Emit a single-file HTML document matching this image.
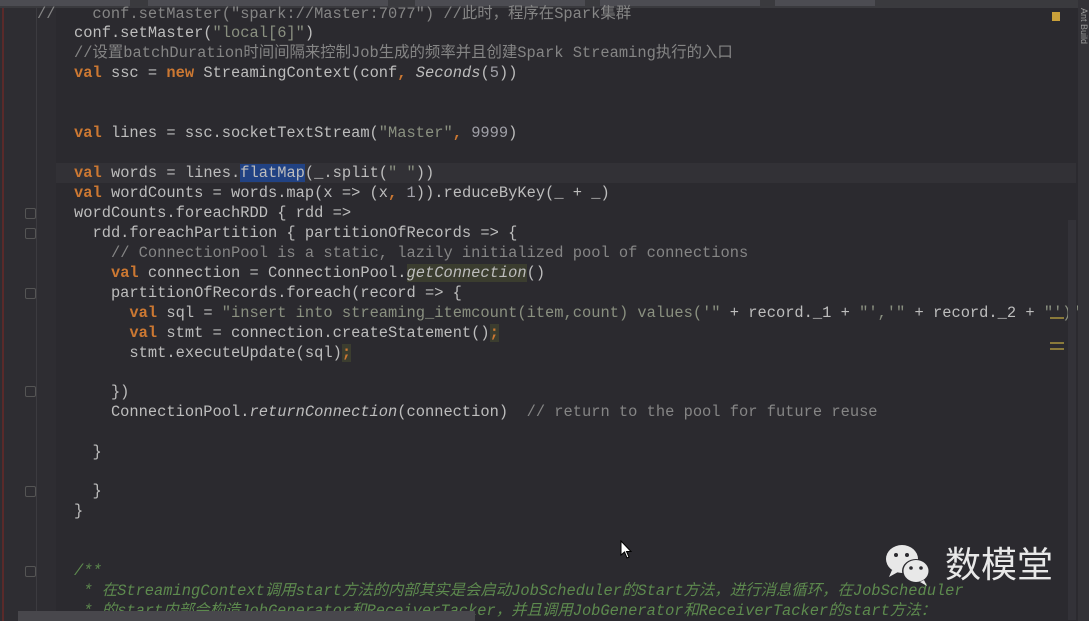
<!DOCTYPE html>
<html><head><meta charset="utf-8"><style>
body{margin:0;width:1089px;height:621px;overflow:hidden;background:#2b2a2f;position:relative;font-family:"Liberation Mono","Noto Sans CJK SC",monospace;}
.tabs{position:absolute;left:0;top:0;width:1089px;height:8px;background:#3a3a3e;}
.tabs i{position:absolute;top:0;height:6px;background:#4c4c52;}
.gut{position:absolute;left:0;top:8px;width:56px;height:613px;background:#2e2d32;}
.red{position:absolute;left:2px;top:8px;width:2px;height:613px;background:#5a2a2a;}
.vl{position:absolute;left:36px;top:8px;width:1px;height:613px;background:#3c3b40;}
.cur{position:absolute;left:56px;top:163px;width:1020px;height:20px;background:#323136;}
.ln{position:absolute;left:0;white-space:pre;font-size:15.4px;line-height:20px;color:#bdbdbd;}
.k{color:#cc7832;font-weight:bold}
.s{color:#8a9080}
.n{color:#a0a0a8}
.c{color:#858585}
.d{color:#5d8a4e;font-style:italic}
.it{font-style:italic}
.sel{background:#214283}
.hl{background:#3b3d2f}
.rp{position:absolute;left:1078px;top:0;width:11px;height:621px;background:#333237;}
.sb{position:absolute;left:1068px;top:220px;width:8px;height:400px;background:#333238;}
.hs{position:absolute;left:18px;top:611px;width:457px;height:10px;background:#48474c;}
.fold{position:absolute;left:25px;width:9px;height:9px;border:1px solid #555;border-radius:2px;}
.wm{position:absolute;left:945px;top:540px;font-family:"Noto Sans CJK SC",sans-serif;font-size:36px;color:#e8e8e8;line-height:44px;}
</style></head><body>
<div class="tabs"><i style="left:0;width:130px"></i><i style="left:148px;width:240px"></i><i style="left:415px;width:170px"></i><i style="left:600px;width:160px"></i><i style="left:775px;width:100px"></i></div>
<div class="gut"></div><div class="red"></div><div class="vl"></div>
<div class="cur"></div>
<div class="fold" style="top:208px"></div><div class="fold" style="top:228px"></div><div class="fold" style="top:288px"></div><div class="fold" style="top:386px"></div><div class="fold" style="top:486px"></div><div class="fold" style="top:566px"></div>
<div class="ln" style="left:37px;top:4px"><span class="c">//    conf.setMaster("spark://Master:7077") //此时，程序在Spark集群</span></div>
<div class="ln" style="left:74px;top:23px">conf.setMaster(<span class="s">"local[6]"</span>)</div>
<div class="ln" style="left:74px;top:43px"><span class="c">//设置batchDuration时间间隔来控制Job生成的频率并且创建Spark Streaming执行的入口</span></div>
<div class="ln" style="left:74px;top:63px"><span class="k">val</span> ssc = <span class="k">new</span> StreamingContext(conf<span class="k">,</span> <span class="it">Seconds</span>(<span class="n">5</span>))</div>
<div class="ln" style="left:74px;top:123px"><span class="k">val</span> lines = ssc.socketTextStream(<span class="s">"Master"</span><span class="k">,</span> <span class="n">9999</span>)</div>
<div class="ln" style="left:74px;top:163px"><span class="k">val</span> words = lines.<span class="sel">flatMap</span>(_.split(<span class="s">" "</span>))</div>
<div class="ln" style="left:74px;top:183px"><span class="k">val</span> wordCounts = words.map(x =&gt; (x<span class="k">,</span> <span class="n">1</span>)).reduceByKey(_ + _)</div>
<div class="ln" style="left:74px;top:203px">wordCounts.foreachRDD { rdd =&gt;</div>
<div class="ln" style="left:74px;top:223px">  rdd.foreachPartition { partitionOfRecords =&gt; {</div>
<div class="ln" style="left:74px;top:243px">    <span class="c">// ConnectionPool is a static, lazily initialized pool of connections</span></div>
<div class="ln" style="left:74px;top:263px">    <span class="k">val</span> connection = ConnectionPool.<span class="it hl">getConnection</span>()</div>
<div class="ln" style="left:74px;top:283px">    partitionOfRecords.foreach(record =&gt; {</div>
<div class="ln" style="left:74px;top:303px">      <span class="k">val</span> sql = <span class="s">"insert into streaming_itemcount(item,count) values('"</span> + record._1 + <span class="s">"','"</span> + record._2 + <span class="s">"')"</span></div>
<div class="ln" style="left:74px;top:323px">      <span class="k">val</span> stmt = connection.createStatement()<span class="hl k">;</span></div>
<div class="ln" style="left:74px;top:343px">      stmt.executeUpdate(sql)<span class="hl k">;</span></div>
<div class="ln" style="left:74px;top:382px">    })</div>
<div class="ln" style="left:74px;top:402px">    ConnectionPool.<span class="it">returnConnection</span>(connection)  <span class="c">// return to the pool for future reuse</span></div>
<div class="ln" style="left:74px;top:442px">  }</div>
<div class="ln" style="left:74px;top:481px">  }</div>
<div class="ln" style="left:74px;top:501px">}</div>
<div class="ln" style="left:74px;top:561px"><span class="d">/**</span></div>
<div class="ln" style="left:74px;top:581px"><span class="d"> * 在StreamingContext调用start方法的内部其实是会启动JobScheduler的Start方法，进行消息循环，在JobScheduler</span></div>
<div class="ln" style="left:74px;top:601px"><span class="d"> * 的start内部会构造JobGenerator和ReceiverTacker，并且调用JobGenerator和ReceiverTacker的start方法：</span></div>
<div class="sb"></div>
<div style="position:absolute;left:1052px;top:12px;width:8px;height:9px;background:#c9a03a"></div>
<div style="position:absolute;left:1050px;top:317px;width:14px;height:2px;background:#8a7a3a"></div>
<div style="position:absolute;left:1050px;top:342px;width:14px;height:2px;background:#8a7a3a"></div>
<div style="position:absolute;left:1050px;top:348px;width:14px;height:2px;background:#8a7a3a"></div>
<div class="rp"></div>
<div style="position:absolute;left:1079px;top:8px;font-family:'Liberation Sans',sans-serif;font-size:9px;color:#999;writing-mode:vertical-rl">Ant Build</div>
<div class="hs"></div>
<svg style="position:absolute;left:880px;top:540px" width="60" height="48" viewBox="0 0 60 48">
<ellipse cx="22" cy="19" rx="16" ry="14" fill="#e8e8e8"/>
<path d="M12 30 L9 37 L18 32Z" fill="#e8e8e8"/>
<circle cx="16" cy="15" r="2" fill="#2b2a2f"/><circle cx="27" cy="15" r="2" fill="#2b2a2f"/>
<ellipse cx="36" cy="31" rx="14" ry="12" fill="#2b2a2f"/>
<ellipse cx="36" cy="31" rx="12.5" ry="11" fill="#e8e8e8"/>
<path d="M44 40 L47 46 L40 42Z" fill="#e8e8e8"/>
<circle cx="31" cy="28" r="1.8" fill="#2b2a2f"/><circle cx="41" cy="28" r="1.8" fill="#2b2a2f"/>
</svg>
<div class="wm">数模堂</div>
<svg style="position:absolute;left:620px;top:540px" width="14" height="20"><path d="M1 1 L1 15 L4.5 12 L7 18 L9 17 L6.5 11.5 L11 11.5Z" fill="#fff" stroke="#000" stroke-width="1"/></svg>
</body></html>
